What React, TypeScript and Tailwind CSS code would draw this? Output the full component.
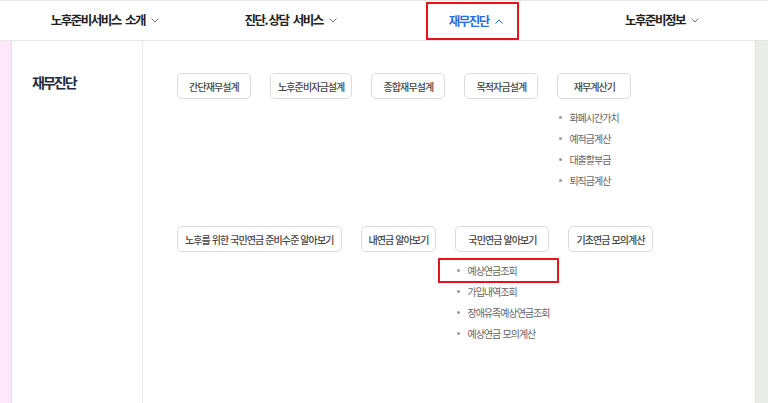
import React from "react";

const font = { fontFamily: '"Noto Sans CJK KR", "Noto Sans", sans-serif' };

type Item = { label: string; sub?: string[]; mark?: number };

const row1: Item[] = [
  { label: "간단재무설계" },
  { label: "노후준비자금설계" },
  { label: "종합재무설계" },
  { label: "목적자금설계" },
  { label: "재무계산기", sub: ["화폐시간가치", "예적금계산", "대출할부금", "퇴직금계산"] },
];

const row2: Item[] = [
  { label: "노후를 위한 국민연금 준비수준 알아보기" },
  { label: "내연금 알아보기" },
  { label: "국민연금 알아보기", sub: ["예상연금조회", "가입내역조회", "장애유족예상연금조회", "예상연금 모의계산"], mark: 0 },
  { label: "기초연금 모의계산" },
];

function Chevron({ up }: { up?: boolean }) {
  return (
    <svg width="8" height="5" viewBox="0 0 8 5" className="ml-[6px]" fill="none" stroke={up ? "#2b6de6" : "#777"} strokeWidth="1">
      {up ? <polyline points="0.5,4.5 4,1 7.5,4.5" /> : <polyline points="0.5,0.5 4,4 7.5,0.5" />}
    </svg>
  );
}

function MenuGroup({ item }: { item: Item }) {
  return (
    <div className="flex flex-col">
      <div className="min-w-[74px] h-[26px] px-[7px] flex items-center justify-center rounded-[5px] border border-[#dcdcdc] bg-white text-[10px] font-medium tracking-[-0.9px] [word-spacing:0.5px] text-[#444] whitespace-nowrap">
        {item.label}
      </div>
      {item.sub && (
        <ul className="mt-[8px] flex flex-col">
          {item.sub.map((s, i) => (
            <li key={s} className="relative h-[21px] flex items-center text-[10px] tracking-[-1px] [word-spacing:1px] text-[#666] whitespace-nowrap">
              <span className="w-[3px] h-[3px] rounded-full bg-[#999] ml-[2px] mr-[7px]" />
              {s}
              {item.mark === i && (
                <span className="absolute -left-[17px] -right-[10px] -top-[2px] -bottom-[2px] border-2 border-[#e3141c]" />
              )}
            </li>
          ))}
        </ul>
      )}
    </div>
  );
}

const nav = "flex-1 flex items-center justify-center text-[12.5px] font-bold tracking-[-1.5px] [word-spacing:3px] text-[#222]";

export default function App() {
  return (
    <div className="w-[768px] h-[403px] overflow-hidden bg-white flex flex-col" style={font}>
      {/* Header */}
      <header className="h-[41px] border-t border-b border-[#e6e6e6] flex pl-[12px] pr-[13px] flex-shrink-0">
        <div className={nav}>
          노후준비서비스 소개<Chevron />
        </div>
        <div className={nav}>
          진단<span className="tracking-normal">.</span>상담 서비스<Chevron />
        </div>
        <div className="flex-1 flex items-end justify-center">
          <div className="h-[38px] pl-[21px] pr-[14px] -ml-[8px] border-2 border-[#e3141c] flex items-center text-[12.5px] font-bold tracking-[-1.5px] text-[#2b6de6]">
            재무진단<Chevron up />
          </div>
        </div>
        <div className={nav}>
          노후준비정보<Chevron />
        </div>
      </header>

      {/* Body */}
      <div className="flex-1 flex">
        <div className="w-[12px] bg-[#fce8f8] border-r border-[#f3d9ec]" />
        <div className="w-[131px] border-r border-[#ececec] pl-[20px] pt-[31px]">
          <h2 className="text-[14px] font-bold tracking-[-2px] text-[#232a3d]">재무진단</h2>
        </div>
        <div className="flex-1 pl-[34px] pt-[32px]">
          <div className="flex items-start gap-[19px]">
            {row1.map((it) => (
              <MenuGroup key={it.label} item={it} />
            ))}
          </div>
          <div className="flex items-start gap-[19px] mt-[35px]">
            {row2.map((it) => (
              <MenuGroup key={it.label} item={it} />
            ))}
          </div>
        </div>
        <div className="w-[13px] bg-[#e9ece9] border-l border-[#dfe2df]" />
      </div>
    </div>
  );
}
